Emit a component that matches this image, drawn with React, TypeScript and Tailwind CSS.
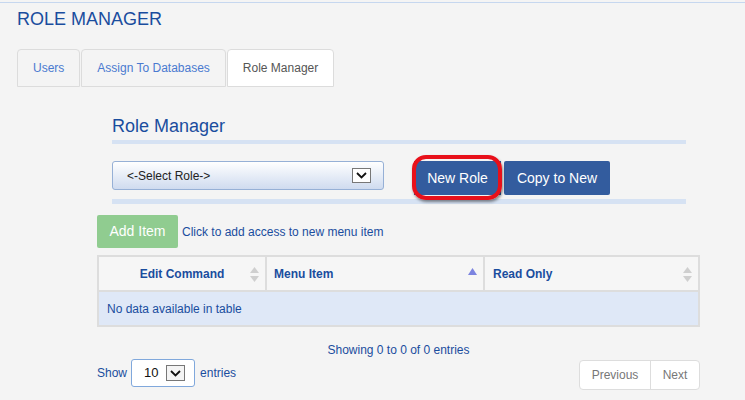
import React from "react";

const Chevron = () => (
  <svg width="11" height="7" viewBox="0 0 11 7">
    <path d="M1 1 L5.5 5.5 L10 1" fill="none" stroke="#111" strokeWidth="1.8" />
  </svg>
);

const SortBoth = () => (
  <svg width="9" height="15" viewBox="0 0 9 15">
    <path d="M4.5 0 L9 6 L0 6 Z" fill="#cfcfcf" />
    <path d="M4.5 15 L9 9 L0 9 Z" fill="#cfcfcf" />
  </svg>
);

const SortUp = () => (
  <svg width="9" height="7" viewBox="0 0 9 7">
    <path d="M4.5 0 L9 7 L0 7 Z" fill="#7c84e0" />
  </svg>
);

export default function App() {
  return (
    <div className="w-[745px] h-[400px] bg-[#f4f4f4] overflow-hidden font-['Liberation_Sans',Arial,sans-serif]">
      <div className="h-[2px]" />
      <div className="h-px bg-[#c6d7ef]" />
      <h1 className="ml-[17px] mt-[6px] text-[18px] leading-[20px] text-[#1a4d9e]">ROLE MANAGER</h1>

      <div className="ml-[17px] mt-[20px] flex gap-px">
        <div className="h-[38px] px-[15px] flex items-center border border-[#dcdcdc] rounded-t-[4px] text-[12px] text-[#4a7ad0]">Users</div>
        <div className="h-[38px] px-[15px] flex items-center border border-[#dcdcdc] rounded-t-[4px] text-[12px] text-[#4a7ad0]">Assign To Databases</div>
        <div className="h-[38px] px-[15px] flex items-center border border-[#dcdcdc] rounded-t-[4px] bg-white text-[12px] text-[#555]">Role Manager</div>
      </div>

      <div className="ml-[97px] w-[603px]">
        <h2 className="ml-[15px] mt-[29px] text-[18px] leading-[20px] text-[#1a4d9e]">Role Manager</h2>
        <div className="ml-[15px] mt-[4px] w-[574px] h-[4px] bg-[#d6e2f3]" />

        <div className="mt-[17px] flex items-start">
          <div className="ml-[15px] w-[272px] h-[29px] rounded-[3px] border border-[#96b0d6] bg-gradient-to-b from-white to-[#cfdbef] flex items-center justify-between pl-[14px] pr-[12px]">
            <span className="text-[12px] text-[#222]">&lt;-Select Role-&gt;</span>
            <span className="w-[19px] h-[15px] bg-white border border-[#777] flex items-center justify-center">
              <Chevron />
            </span>
          </div>
          <div className="relative ml-[30px]">
            <div className="w-[87px] h-[34px] bg-[#335c9e] flex items-center justify-center text-[14px] text-white">New Role</div>
            <div className="absolute left-[-2px] right-[-1px] top-[-6px] bottom-[-5px] rounded-[14px] border-4 border-[#e8101a] shadow-[1px_2px_3px_rgba(0,0,0,0.45)]" />
          </div>
          <div className="ml-[3px] w-[106px] h-[34px] bg-[#335c9e] rounded-[2px] flex items-center justify-center text-[14px] text-white">Copy to New</div>
        </div>

        <div className="ml-[15px] mt-[4px] w-[574px] h-[5px] bg-[#d6e2f3]" />

        <div className="mt-[11px] flex items-center">
          <div className="w-[81px] h-[33px] bg-[#90cc90] rounded-[2px] flex items-center justify-center text-[14px] text-white">Add Item</div>
          <span className="ml-[4px] text-[12px] text-[#1a4d9e]">Click to add access to new menu item</span>
        </div>

        <div className="mt-[7px] border-2 border-[#dddddd]">
          <div className="flex h-[35px] bg-[#f6f6f6] border-b-2 border-[#dddddd] text-[12px] font-bold text-[#1a4d9e]">
            <div className="w-[166px] relative flex items-center justify-center">
              Edit Command
              <span className="absolute right-[6px] top-[10px]"><SortBoth /></span>
            </div>
            <div className="w-[2px] bg-[#dddddd]" />
            <div className="w-[216px] relative flex items-center pl-[7px]">
              Menu Item
              <span className="absolute right-[6px] top-[11px]"><SortUp /></span>
            </div>
            <div className="w-[2px] bg-[#dddddd]" />
            <div className="w-[213px] relative flex items-center pl-[8px]">
              Read Only
              <span className="absolute right-[6px] top-[10px]"><SortBoth /></span>
            </div>
          </div>
          <div className="h-[33px] bg-[#dfe8f7] flex items-center pl-[8px] text-[12px] text-[#1a4d9e]">No data available in table</div>
        </div>

        <div className="mt-[16px] text-center text-[12px] leading-[14px] text-[#1a4d9e]">Showing 0 to 0 of 0 entries</div>

        <div className="mt-[2px] flex justify-between items-start">
          <div className="flex items-center text-[12px] text-[#1a4d9e]">
            <span>Show</span>
            <div className="ml-[4px] w-[64px] h-[28px] bg-white border border-[#80a8dc] rounded-[3px] flex items-center pl-[12px] pr-[9px] justify-between">
              <span className="text-[13px] text-[#111]">10</span>
              <span className="w-[19px] h-[16px] bg-[#f4f4f4] border border-[#777] flex items-center justify-center">
                <Chevron />
              </span>
            </div>
            <span className="ml-[5px]">entries</span>
          </div>
          <div className="mt-[1px] flex h-[30px] bg-white border border-[#dddddd] rounded-[4px] text-[12px] text-[#777]">
            <div className="w-[71px] flex items-center justify-center border-r border-[#dddddd]">Previous</div>
            <div className="w-[48px] flex items-center justify-center">Next</div>
          </div>
        </div>
      </div>
    </div>
  );
}
